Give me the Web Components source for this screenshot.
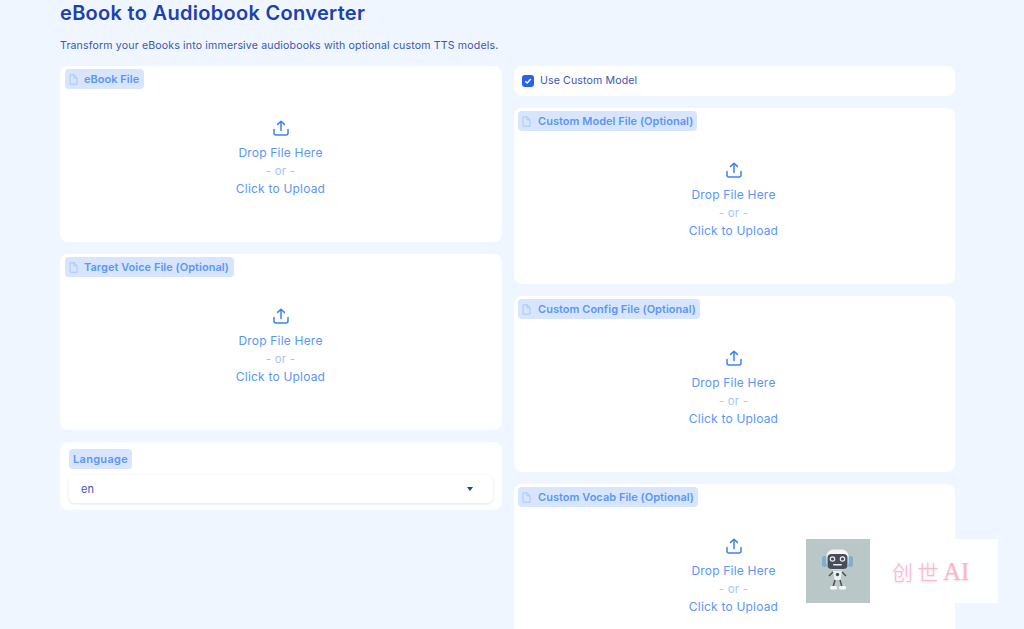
<!doctype html>
<html lang="en">
<head>
<meta charset="UTF-8">
<title>eBook to Audiobook Converter</title>
<style>
  html, body { margin: 0; height: 629px; overflow: hidden; background: #eff6ff; }
  body { font-family: Inter, "Noto Sans", sans-serif; }
</style>
</head>
<body>
<app-page>
  <h-title slot="head"></h-title>
  <upload-box slot="left" label="eBook File"></upload-box>
  <upload-box slot="left" label="Target Voice File (Optional)"></upload-box>
  <lang-select slot="left" label="Language" value="en"></lang-select>
  <check-row slot="right" label="Use Custom Model"></check-row>
  <upload-box slot="right" right label="Custom Model File (Optional)"></upload-box>
  <upload-box slot="right" right label="Custom Config File (Optional)"></upload-box>
  <upload-box slot="right" right label="Custom Vocab File (Optional)"></upload-box>
</app-page>
<robot-mark></robot-mark>

<script>
  const badgeCss = `
    .badge { display: flex; width: fit-content; align-items: center; gap: 6px; height: 20px; padding: 0 5px 0 4px; box-sizing: border-box;
      background: #d7e6fe; border-radius: 4px; color: #5b96f8; font-size: 11px; font-weight: 600; white-space: nowrap; letter-spacing: .03px; }
    .badge svg { width: 9px; height: 11px; flex: none; }
  `
  const fileIcon = `<svg viewBox="0 0 9 11" fill="none" stroke="#a9c7fb" stroke-width="1"><path d="M1 .8h4.2L8 3.6v6.6H1zM5 .8v3h3"/></svg>`

  class AppPage extends HTMLElement {
    constructor () {
      super()
      this.attachShadow({mode: 'open'}).innerHTML = `
      <style>
        :host { display: block; padding: 0 69px 0 60px; }
        .cols { display: grid; grid-template-columns: 442px 441px; column-gap: 12px; margin-top: 0; }
        .col { display: flex; flex-direction: column; gap: 12px; min-width: 0; }
      </style>
      <slot name="head"></slot>
      <div class="cols">
        <div class="col"><slot name="left"></slot></div>
        <div class="col"><slot name="right"></slot></div>
      </div>`
    }
  }
  customElements.define('app-page', AppPage)

  class HTitle extends HTMLElement {
    constructor () {
      super()
      this.attachShadow({mode: 'open'}).innerHTML = `
      <style>
        :host { display: block; height: 66px; }
        h1 { margin: 0; padding-top: 1px; font-size: 20px; line-height: 24px; font-weight: 600; color: #1e40af; letter-spacing: .3px; }
        p { margin: 0; padding-top: 14px; font-size: 10.6px; line-height: 14px; color: #3b57b4; letter-spacing: .145px; }
      </style>
      <h1>eBook to Audiobook Converter</h1>
      <p>Transform your eBooks into immersive audiobooks with optional custom TTS models.</p>`
    }
  }
  customElements.define('h-title', HTitle)

  class UploadBox extends HTMLElement {
    constructor () {
      super()
      this.attachShadow({mode: 'open'}).innerHTML = `
      <style>
        :host { display: block; height: 176px; flex: none; background: #fff; border-radius: 8px; padding: 3px 0 0 5px; box-sizing: border-box; }
        :host([right]) { padding-left: 4px; }
        :host([right]) .badge { gap: 7px; padding-right: 4px; }
        ${badgeCss}
        .drop { display: flex; flex-direction: column; align-items: center; margin: 0 1px 0 -5px; padding-top: 30px;
          color: #5b96f8; font-size: 12px; line-height: 17.6px; letter-spacing: .2px; }
        .drop svg { width: 18px; height: 18px; margin-bottom: 7px; }
        .or { color: #a6c5fb; font-size: 11.5px; margin-top: 1px; }
      </style>
      <div class="badge">${fileIcon}<span id="t"></span></div>
      <div class="drop">
        <svg viewBox="0 0 18 18" fill="none" stroke="#3b82f6" stroke-width="1.5" stroke-linecap="round" stroke-linejoin="round"><path d="M9 11.5V2.2M5.6 5.4 9 2.2l3.4 3.2M2 10.5v3.6a2 2 0 0 0 2 2h10a2 2 0 0 0 2-2v-3.6"/></svg>
        <span>Drop File Here</span>
        <span class="or">- or -</span>
        <span>Click to Upload</span>
      </div>`
      this.shadowRoot.getElementById('t').textContent = this.getAttribute('label')
    }
  }
  customElements.define('upload-box', UploadBox)

  class LangSelect extends HTMLElement {
    constructor () {
      super()
      this.attachShadow({mode: 'open'}).innerHTML = `
      <style>
        :host { display: block; height: 68px; background: #fff; border-radius: 8px; padding: 7px 9px 0 9px; box-sizing: border-box; }
        ${badgeCss}
        .badge { padding: 0 4px; letter-spacing: .3px; }
        .field { display: flex; justify-content: space-between; align-items: center; height: 28px; margin-top: 6px; padding: 0 20px 0 12px; box-sizing: border-box;
          background: #fff; border-radius: 6px; box-shadow: 0 1px 3px rgba(30,64,175,.14); color: #3b57b4; font-size: 11px; }
        .arrow { width: 0; height: 0; border-left: 3.5px solid transparent; border-right: 3.5px solid transparent; border-top: 4px solid #1e40af; }
      </style>
      <div class="badge" id="t"></div>
      <div class="field"><span id="v"></span><i class="arrow"></i></div>`
      this.shadowRoot.getElementById('t').textContent = this.getAttribute('label')
      this.shadowRoot.getElementById('v').textContent = this.getAttribute('value')
    }
  }
  customElements.define('lang-select', LangSelect)

  class CheckRow extends HTMLElement {
    constructor () {
      super()
      this.attachShadow({mode: 'open'}).innerHTML = `
      <style>
        :host { display: flex; align-items: center; gap: 6px; height: 30px; background: #fff; border-radius: 8px; padding: 0 8px 1px; box-sizing: border-box;
          color: #3b57b4; font-size: 10.6px; letter-spacing: .12px; }
        .box { width: 12px; height: 12px; border-radius: 3px; background: #2563eb; display: flex; align-items: center; justify-content: center; }
        svg { width: 8px; height: 8px; }
      </style>
      <span class="box"><svg viewBox="0 0 8 8" fill="none" stroke="#fff" stroke-width="1.5"><path d="M1.2 4.2 3.2 6l3.6-4"/></svg></span>
      <span id="t"></span>`
      this.shadowRoot.getElementById('t').textContent = this.getAttribute('label')
    }
  }
  customElements.define('check-row', CheckRow)

  // watermark sits on top of the last card
  class RobotMark extends HTMLElement {
    constructor () {
      super()
      this.attachShadow({mode: 'open'}).innerHTML = `
      <style>
        :host { position: absolute; left: 806px; top: 539px; width: 192px; height: 64px; display: flex; align-items: center; background: rgba(255,255,255,.92); }
        .pic { width: 64px; height: 64px; flex: none; background: #b9c8c6; }
        span { margin-left: 22px; font-family: "Noto Sans CJK SC", "Liberation Serif", serif; font-weight: 300; font-size: 21px; color: #fbb6cf; white-space: nowrap; letter-spacing: 4.5px; text-shadow: 0 1px 2px rgba(200,180,190,.5); }
        b { font-family: "Liberation Serif", serif; font-weight: 400; font-size: 25px; letter-spacing: 0; }
      </style>
      <div class="pic">
        <svg width="64" height="64" viewBox="0 0 64 64">
          <rect x="16" y="17" width="5" height="11" rx="2.5" fill="#7fb0c8"/><rect x="42" y="17" width="5" height="11" rx="2.5" fill="#7fb0c8"/>
          <rect x="20.5" y="10.5" width="22" height="20" rx="7" fill="#f4f6f6"/>
          <rect x="21.5" y="15" width="20" height="15" rx="4" fill="#474c59"/>
          <circle cx="26.5" cy="20" r="2.2" fill="none" stroke="#eee" stroke-width="1.2"/><circle cx="36.5" cy="20" r="2.2" fill="none" stroke="#eee" stroke-width="1.2"/>
          <rect x="27" y="25" width="9" height="1.6" rx=".8" fill="#eee"/>
          <path d="M27 32h9l-1.5 9h-6z" fill="#eef0f0"/><circle cx="31.5" cy="35.5" r="1.7" fill="#474c59"/>
          <path d="M27 33l-4 4M36 33l4 4M29 41l-2 7M34 41l2 7" stroke="#4a4f5a" stroke-width="1.5" fill="none"/>
          <rect x="24" y="47" width="7" height="3.5" rx="1.5" fill="#f7f7f7"/><rect x="33" y="47" width="7" height="3.5" rx="1.5" fill="#f7f7f7"/>
        </svg>
      </div>
      <span>创世<b>AI</b></span>`
    }
  }
  customElements.define('robot-mark', RobotMark)
</script>
</body>
</html>
